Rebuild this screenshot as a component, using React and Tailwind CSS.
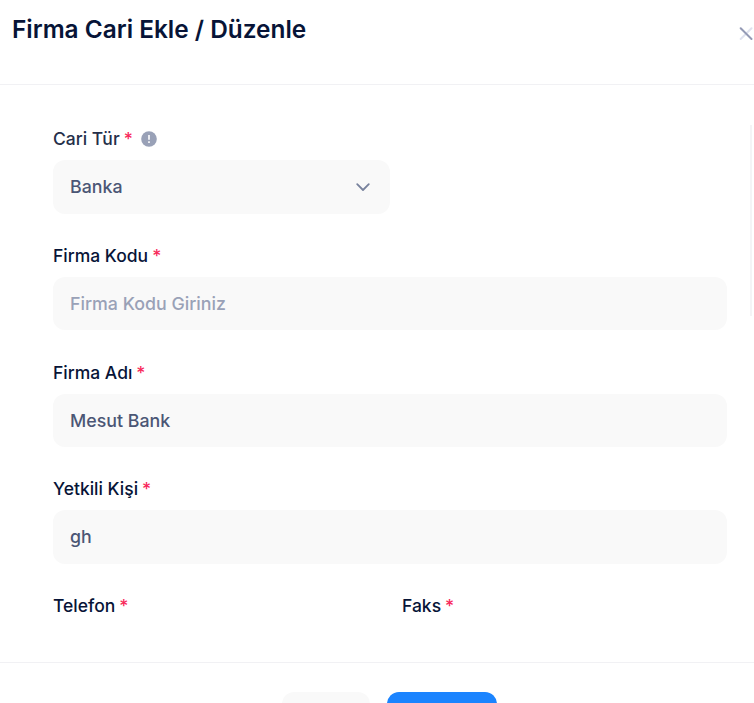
function Label({ children, muted }) {
  return (
    <div
      className={`h-[24px] whitespace-nowrap text-[17.5px] leading-[24px] font-medium ${
        muted ? "text-[#252f4a]" : "text-[#071437]"
      }`}
    >
      {children}
      <span className="ml-[4px] text-[#f8285a]">*</span>
    </div>
  );
}

function Field({ label, value, placeholder }) {
  return (
    <div className="h-[116.75px]">
      <Label>{label}</Label>
      <div
        className={`mt-[9px] flex h-[53.5px] items-center rounded-[12px] bg-[#f9f9f9] px-[17px] pt-[1.5px] text-[17.8px] font-medium ${
          placeholder ? "text-[#99a1b7]" : "text-[#4b5675]"
        }`}
      >
        {value || placeholder}
      </div>
    </div>
  );
}

export default function App() {
  return (
    <div className="flex h-[703px] w-[754px] flex-col overflow-hidden bg-white font-['Inter',sans-serif]">
      <header className="flex h-[85px] shrink-0 items-start justify-between border-b border-[#f1f1f4] pl-[12px]">
        <h2 className="pt-[14px] text-[24.4px] leading-[31px] font-semibold text-[#071437]">Firma Cari Ekle / Düzenle</h2>
        <svg className="mt-[27px] h-[14px] w-[15px] shrink-0" viewBox="0 0 15 14" fill="none" strokeLinecap="round">
          <path d="M12.5 1.2L1.7 12" stroke="#dfe2ef" strokeWidth="2" />
          <path d="M1.7 1.2L12.5 12" stroke="#949ab5" strokeWidth="2" />
        </svg>
      </header>
      <main className="flex h-[577px] shrink-0 justify-between overflow-hidden">
        <div className="w-[727px] pt-[42px] pl-[53px]">
          <div className="h-[116.75px]">
            <div className="flex items-center">
              <Label muted>Cari Tür</Label>
              <svg className="mb-[1px] ml-[8.5px] h-[16px] w-[16px]" viewBox="0 0 16 16">
                <circle cx="8" cy="8" r="7.8" fill="#99a1b7" />
                <path d="M8 4V8.7M8 10.3V12" stroke="white" strokeWidth="1.6" />
              </svg>
            </div>
            <div className="mt-[9px] flex h-[53.5px] w-[337px] items-center justify-between rounded-[12px] bg-[#f9f9f9] pt-[1.5px] pr-[19px] pl-[17px] text-[17.8px] font-medium text-[#4b5675]">
              Banka
              <svg className="mb-[2px] h-[16px] w-[16px]" viewBox="0 0 16 16" fill="none" stroke="#78829d" strokeWidth="1.8" strokeLinecap="round" strokeLinejoin="round">
                <path d="M2.2 5.2L8 11L13.8 5.2" />
              </svg>
            </div>
          </div>
          <Field label="Firma Kodu" placeholder="Firma Kodu Giriniz" />
          <Field label="Firma Adı" value="Mesut Bank" />
          <Field label="Yetkili Kişi" value="gh" />
          <div className="grid grid-cols-[349px_1fr]">
            <Label>Telefon</Label>
            <Label>Faks</Label>
          </div>
        </div>
        <div className="mt-[40px] mr-[2px] h-[191px] w-[2px] bg-[#f4f4f6]" />
      </main>
      <footer className="flex h-[60px] shrink-0 items-start gap-[17px] border-t border-[#f1f1f4] pt-[29px] pl-[282px]">
        <div className="h-[54px] w-[88px] rounded-[12px] bg-[#f9f9f9]" />
        <div className="h-[54px] w-[110px] rounded-[12px] bg-[#1b84ff]" />
      </footer>
    </div>
  );
}
